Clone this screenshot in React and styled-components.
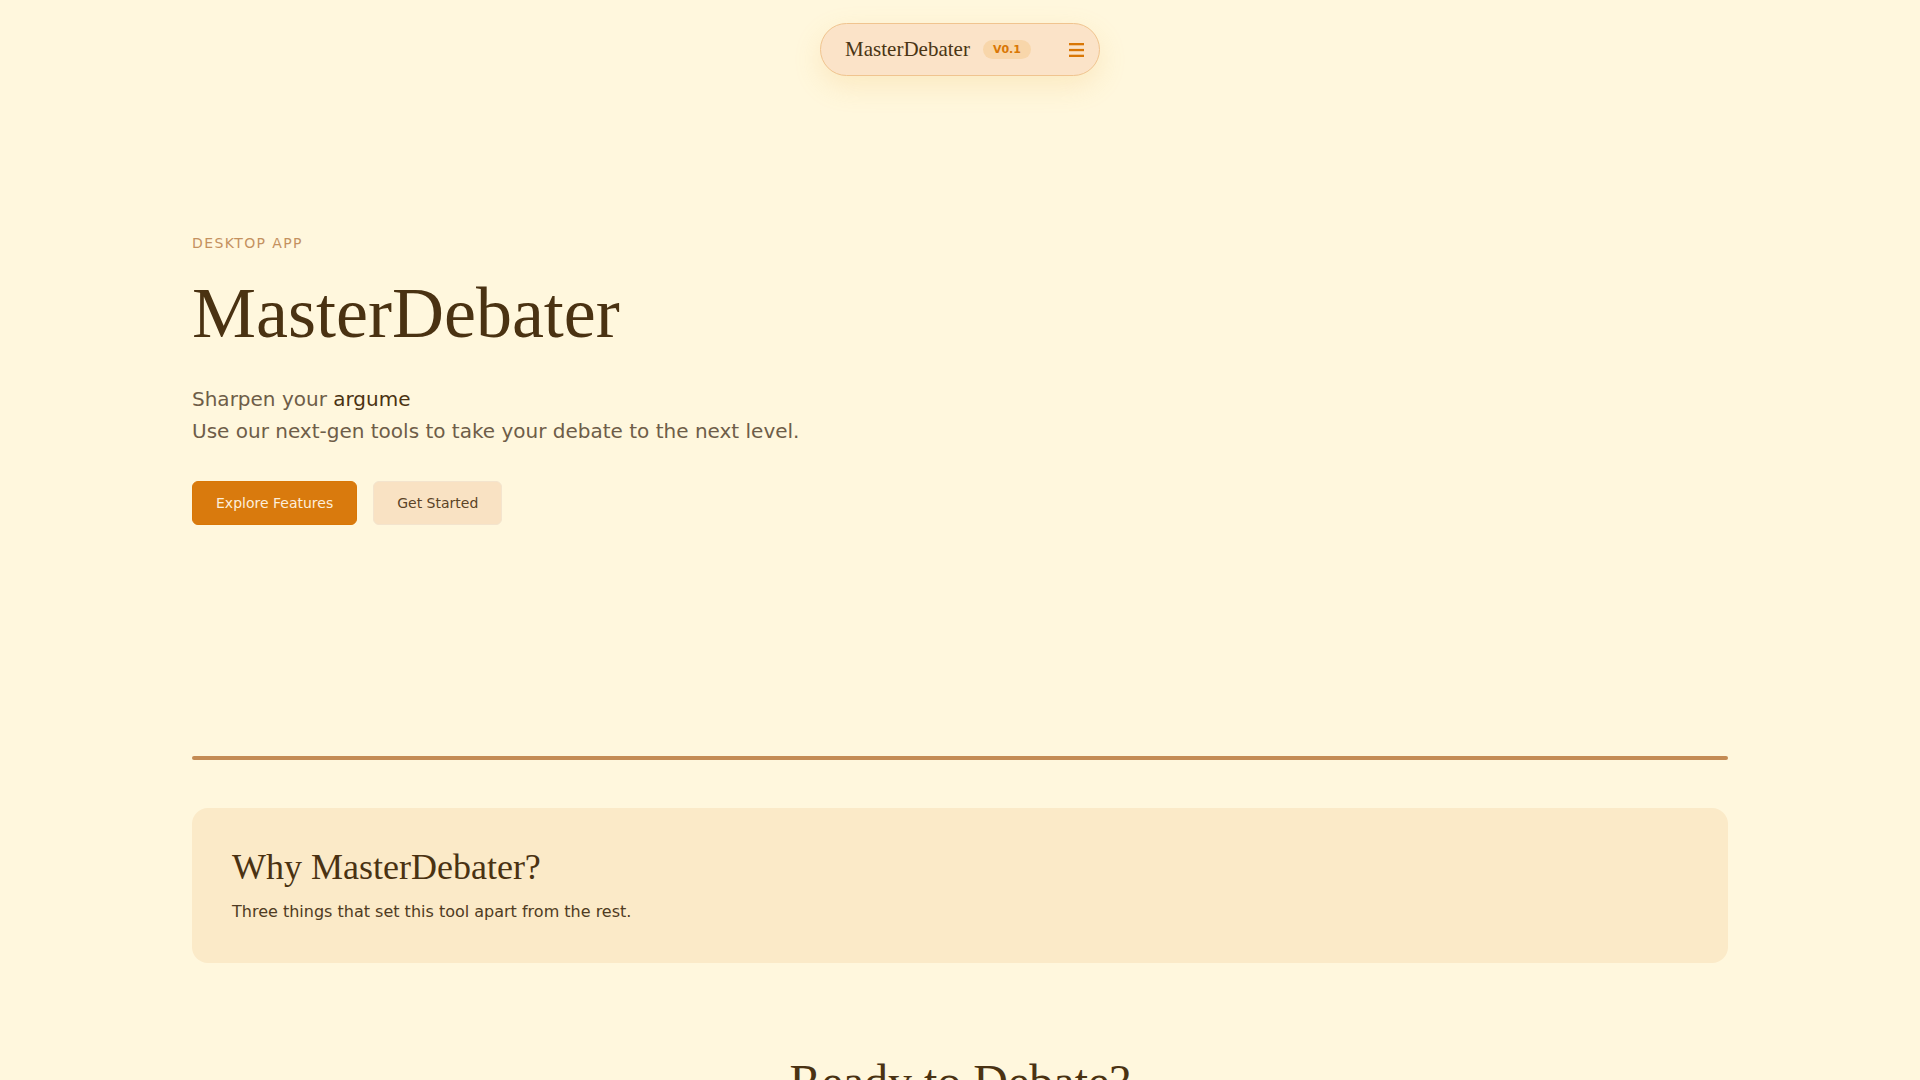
import React from 'react';
import styled, { createGlobalStyle } from 'styled-components';

const GlobalStyle = createGlobalStyle`
    html, body {
        margin: 0;
        padding: 0;
        background: #fff7dd;
    }
    body {
        font-family: "DejaVu Sans", "Noto Sans", sans-serif;
        color: #4a3212;
    }
    * {
        box-sizing: border-box;
    }
`;

const Page = styled.div`
    max-width: 1536px;
    margin: 0 auto;
`;

const NavBar = styled.header`
    display: flex;
    justify-content: center;
    padding-top: 23px;
`;

const NavPill = styled.nav`
    display: flex;
    align-items: center;
    height: 53px;
    padding: 0 15px 0 24px;
    border: 1px solid #f0c48f;
    border-radius: 999px;
    background: #fbe3c8;
    box-shadow: 0 10px 28px rgba(236, 178, 80, 0.2);
`;

const Brand = styled.span`
    font-family: "Liberation Serif", "Times New Roman", serif;
    font-size: 21px;
    color: #4a3514;
    white-space: nowrap;
`;

const Badge = styled.span`
    margin-left: 13px;
    padding: 3px 10px;
    border-radius: 999px;
    background: #f8d6aa;
    color: #d97706;
    font-size: 11px;
    line-height: 13px;
    font-weight: 700;
    text-transform: uppercase;
`;

const MenuButton = styled.button`
    display: flex;
    margin-left: 38px;
    padding: 0;
    border: none;
    background: none;
    color: #d97706;
    cursor: pointer;
`;

const Hero = styled.section`
    padding: 157px 0 231px;
`;

const Eyebrow = styled.p`
    margin: 0 0 21px;
    font-size: 14px;
    line-height: 20px;
    letter-spacing: 0.1em;
    text-transform: uppercase;
    color: #c4915f;
`;

const Title = styled.h1`
    margin: 0;
    font-family: "Liberation Serif", "Times New Roman", serif;
    font-size: 72px;
    line-height: 1.1;
    font-weight: 400;
    color: #4a3212;
`;

const Tagline = styled.div`
    margin-top: 30px;
    font-size: 20px;
    line-height: 32px;
    color: #6e5d48;
`;

const Typed = styled.span`
    color: #4a3212;
`;

const Actions = styled.div`
    display: flex;
    gap: 16px;
    margin-top: 34px;
`;

const Button = styled.button`
    height: 44px;
    padding: 0 23px;
    border-radius: 6px;
    font-family: "DejaVu Sans", sans-serif;
    font-size: 14px;
    cursor: pointer;
    border: 1px solid ${({ $primary }) => ($primary ? '#d97706' : '#f4e4cd')};
    background: ${({ $primary }) => ($primary ? '#d97a0d' : '#f9e2c3')};
    color: ${({ $primary }) => ($primary ? '#fdeedb' : '#5b4327')};
`;

const Divider = styled.hr`
    margin: 0;
    height: 4px;
    border: none;
    border-radius: 2px;
    background: #c48b54;
`;

const Card = styled.section`
    margin-top: 48px;
    padding: 41px 40px 39px;
    border-radius: 16px;
    background: #fbeac8;
`;

const CardTitle = styled.h2`
    margin: 0;
    font-family: "Liberation Serif", "Times New Roman", serif;
    font-size: 36px;
    line-height: 1;
    font-weight: 400;
    color: #4a3212;
`;

const CardText = styled.p`
    margin: 15px 0 0;
    font-size: 16px;
    line-height: 24px;
    color: #4f3b22;
`;

const Cta = styled.section`
    margin-top: 93px;
    padding-bottom: 80px;
    text-align: center;
`;

const CtaTitle = styled.h2`
    margin: 0;
    font-family: "Liberation Serif", "Times New Roman", serif;
    font-size: 48px;
    line-height: 1.1;
    font-weight: 400;
    color: #4a3212;
`;

const MenuIcon = () => (
    <svg width="15" height="14" viewBox="0 0 15 14" fill="currentColor" aria-hidden="true">
        <rect x="0" y="0" width="15" height="2.3" />
        <rect x="0" y="5.9" width="15" height="2.3" />
        <rect x="0" y="11.7" width="15" height="2.3" />
    </svg>
);

export default function App() {
    return (
        <>
            <GlobalStyle />
            <Page>
                <NavBar>
                    <NavPill>
                        <Brand>MasterDebater</Brand>
                        <Badge>v0.1</Badge>
                        <MenuButton aria-label="Menu">
                            <MenuIcon />
                        </MenuButton>
                    </NavPill>
                </NavBar>

                <Hero>
                    <Eyebrow>Desktop App</Eyebrow>
                    <Title>MasterDebater</Title>
                    <Tagline>
                        <div>
                            Sharpen your <Typed>argume</Typed>
                        </div>
                        <div>Use our next-gen tools to take your debate to the next level.</div>
                    </Tagline>
                    <Actions>
                        <Button $primary>Explore Features</Button>
                        <Button>Get Started</Button>
                    </Actions>
                </Hero>

                <Divider />

                <Card>
                    <CardTitle>Why MasterDebater?</CardTitle>
                    <CardText>Three things that set this tool apart from the rest.</CardText>
                </Card>

                <Cta>
                    <CtaTitle>Ready to Debate?</CtaTitle>
                </Cta>
            </Page>
        </>
    );
}
